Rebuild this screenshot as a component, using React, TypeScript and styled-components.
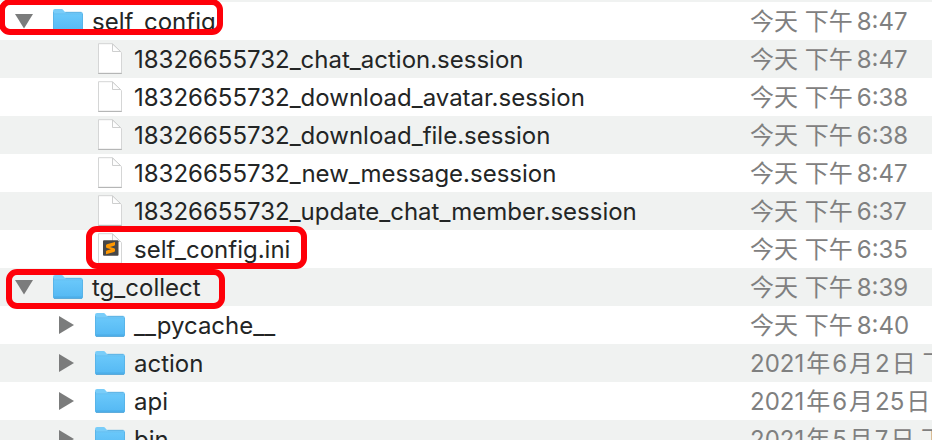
import React, { useState } from "react";
import styled, { createGlobalStyle, css } from "styled-components";

const GlobalStyle = createGlobalStyle`
  *, *::before, *::after { box-sizing: border-box; }
  html, body, #root { height: 100%; }
  body {
    margin: 0;
    overflow: hidden;
    background: #ffffff;
    font-family: Inter, "Noto Sans CJK SC", sans-serif;
    font-size: 24px;
    color: #232525;
  }
`;

type Kind = "folder" | "file" | "sublime";

interface Entry {
  id: string;
  name: string;
  kind: Kind;
  level: 0 | 1;
  open?: boolean;
  marked?: "wide" | "name" | "top";
  date: string[];
}

const entries: Entry[] = [
  { id: "self", name: "self_config", kind: "folder", level: 0, open: true, marked: "top", date: ["今天 下午", "8:47"] },
  { id: "s1", name: "18326655732_chat_action.session", kind: "file", level: 1, date: ["今天 下午", "8:47"] },
  { id: "s2", name: "18326655732_download_avatar.session", kind: "file", level: 1, date: ["今天 下午", "6:38"] },
  { id: "s3", name: "18326655732_download_file.session", kind: "file", level: 1, date: ["今天 下午", "6:38"] },
  { id: "s4", name: "18326655732_new_message.session", kind: "file", level: 1, date: ["今天 下午", "8:47"] },
  { id: "s5", name: "18326655732_update_chat_member.session", kind: "file", level: 1, date: ["今天 下午", "6:37"] },
  { id: "ini", name: "self_config.ini", kind: "sublime", level: 1, marked: "name", date: ["今天 下午", "6:35"] },
  { id: "tg", name: "tg_collect", kind: "folder", level: 0, open: true, marked: "wide", date: ["今天 下午", "8:39"] },
  { id: "pyc", name: "__pycache__", kind: "folder", level: 1, open: false, date: ["今天 下午", "8:40"] },
  { id: "action", name: "action", kind: "folder", level: 1, open: false, date: ["2021", "年", "6", "月", "2", "日 下午"] },
  { id: "api", name: "api", kind: "folder", level: 1, open: false, date: ["2021", "年", "6", "月", "25", "日 下午"] },
  { id: "bin", name: "bin", kind: "folder", level: 1, open: false, date: ["2021", "年", "5", "月", "7", "日 下午"] },
];

const Window = styled.main`
  height: 100%;
  overflow: hidden;
`;

const ScrolledRowEdge = styled.div`
  height: 2px;
  background: #f0f2f1;
`;

const FileTable = styled.table`
  width: 100%;
  table-layout: fixed;
  border-collapse: collapse;
`;

const DateColumn = styled.col`
  width: 182px;
`;

const Row = styled.tr`
  height: 38px;
  &:nth-child(even) { background: #f0f2f1; }
`;

const NameCell = styled.td`
  position: relative;
  padding: 0;
`;

const DateCell = styled.td`
  padding: 0;
  color: #7f8080;
`;

const NameLine = styled.div<{ $level: number }>`
  display: flex;
  align-items: center;
  height: 38px;
  padding-left: ${(p) => 12 + p.$level * 42}px;
`;

const Disclosure = styled.button`
  display: flex;
  align-items: center;
  justify-content: center;
  width: 24px;
  height: 24px;
  padding: 0;
  border: 0;
  background: none;
`;

const DisclosureSpace = styled.span`
  width: 24px;
`;

const IconSlot = styled.span`
  display: flex;
  justify-content: center;
  width: 32px;
  margin: 0 8px 0 16px;
`;

const Name = styled.span`
  white-space: nowrap;
  line-height: 38px;
  padding-top: 2px;
`;

const DateLine = styled.time<{ $gap: number }>`
  display: flex;
  gap: ${(p) => p.$gap}px;
  height: 38px;
  padding-top: 1px;
  overflow: hidden;
  line-height: 38px;
  white-space: nowrap;
`;

const marks = {
  top: css`left: -1px; top: -3px; width: 224px; height: 36px;`,
  name: css`left: 86px; top: -4px; width: 221px; height: 43px;`,
  wide: css`left: 6px; top: 1px; width: 219px; height: 40px;`,
};

const Mark = styled.span<{ $shape: keyof typeof marks }>`
  position: absolute;
  z-index: 1;
  border: 6px solid #fe0009;
  border-radius: 11px;
  pointer-events: none;
  ${(p) => marks[p.$shape]}
`;

const Triangle = ({ open }: { open: boolean }) => (
  <svg width="20" height="20" viewBox="0 0 20 20" aria-hidden="true">
    <path d={open ? "M1 3H19L10 17.5Z" : "M3 1L18 10L3 19Z"} fill="#7b7c7c" />
  </svg>
);

const FolderIcon = () => (
  <svg width="32" height="26" viewBox="0 0 32 26" aria-hidden="true">
    <defs>
      <linearGradient id="folderFace" x1="0" y1="0" x2="0" y2="1">
        <stop offset="0" stopColor="#6ac8fa" />
        <stop offset="1" stopColor="#54b8f3" />
      </linearGradient>
    </defs>
    <path d="M1 24V3Q1 1 3 1H9.5Q10.6 1 11.3 2L12 3Q12.7 4 14 4H29Q31 4 31 6V24Z" fill="#79cdf9" />
    <path d="M13.5 4.3H29.5" stroke="#56abdd" strokeWidth="0.8" />
    <path d="M1 6H31V23Q31 24.5 29.5 24.5H2.5Q1 24.5 1 23Z" fill="url(#folderFace)" />
    <path d="M1.5 5.8H30.5" stroke="#65bdf0" strokeWidth="0.8" />
    <path d="M1.5 4V23M30.5 6V23" stroke="#57b1e5" strokeWidth="0.8" />
    <path d="M2 24.2H30" stroke="#3f98d0" />
    <path d="M2 22.5H30" stroke="#4eaee7" strokeWidth="0.6" />
  </svg>
);

const DocumentIcon = ({ sublime }: { sublime: boolean }) => (
  <svg width="26" height="32" viewBox="0 0 26 32" aria-hidden="true">
    <path d="M1.5 0.7H15.5L24.5 9.7V30.2H1.5Z" fill="#ffffff" stroke="#d0d1d1" strokeWidth="0.9" />
    <path d="M1.2 30.5H24.8" stroke="#b0b1b1" strokeWidth="0.9" />
    <path d="M15.5 1V8.5H23.5Z" fill="#fdfdfd" stroke="#c8c9c9" strokeWidth="0.9" strokeLinejoin="round" />
    {sublime && (
      <>
        <rect x="6" y="7.3" width="15.5" height="15.5" rx="1" fill="#474747" />
        <path d="M9 12.4Q9 11.6 10 11.3L18 8.9V11.8Q18 12.4 17.2 12.7L13 14L17.2 15.3Q18 15.6 18 16.3V17.7Q18 18.6 17 18.9L9 21.3V18.5Q9 17.8 9.8 17.5L14 16.2L9.8 14.9Q9 14.6 9 13.9Z" fill="#ff9800" />
      </>
    )}
  </svg>
);

export default function App() {
  const [openIds, setOpenIds] = useState<string[]>(
    entries.filter((e) => e.open).map((e) => e.id)
  );
  const toggle = (id: string) =>
    setOpenIds((ids) => (ids.includes(id) ? ids.filter((i) => i !== id) : [...ids, id]));

  return (
    <>
      <GlobalStyle />
      <Window>
        <ScrolledRowEdge />
        <FileTable>
          <colgroup>
            <col />
            <DateColumn />
          </colgroup>
          <tbody>
            {entries.map((e) => (
              <Row key={e.id}>
                <NameCell>
                  <NameLine $level={e.level}>
                    {e.kind === "folder" ? (
                      <Disclosure
                        type="button"
                        aria-label={e.name}
                        aria-expanded={openIds.includes(e.id)}
                        onClick={() => toggle(e.id)}
                      >
                        <Triangle open={openIds.includes(e.id)} />
                      </Disclosure>
                    ) : (
                      <DisclosureSpace />
                    )}
                    <IconSlot>
                      {e.kind === "folder" ? <FolderIcon /> : <DocumentIcon sublime={e.kind === "sublime"} />}
                    </IconSlot>
                    <Name>{e.name}</Name>
                  </NameLine>
                  {e.marked && <Mark $shape={e.marked} />}
                </NameCell>
                <DateCell>
                  <DateLine $gap={e.date.length > 2 ? 2 : 4}>
                    {e.date.map((part, i) => (
                      <span key={i}>{part}</span>
                    ))}
                  </DateLine>
                </DateCell>
              </Row>
            ))}
          </tbody>
        </FileTable>
      </Window>
    </>
  );
}
